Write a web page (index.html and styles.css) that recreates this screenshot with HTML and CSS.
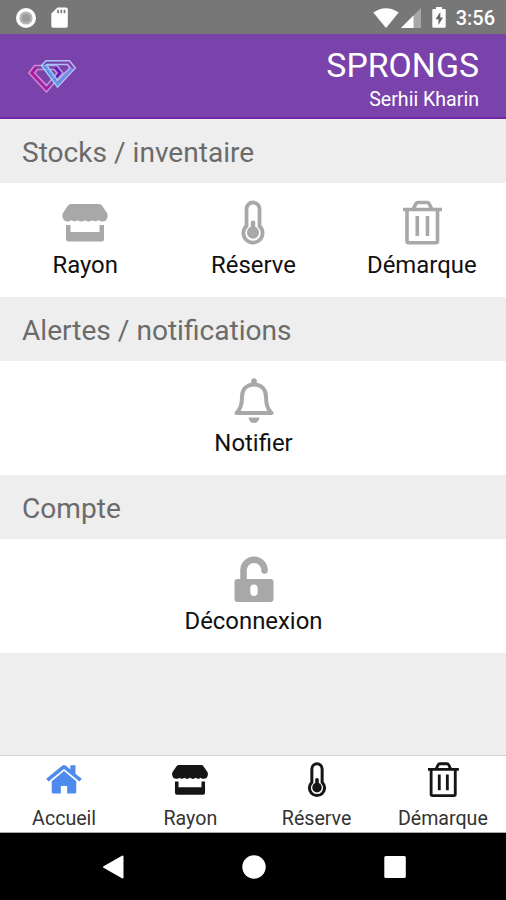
FILE: index.html
```
<!DOCTYPE html>
<html lang="fr">
<head>
    <meta charset="UTF-8">
    <meta name="viewport" content="width=device-width, initial-scale=1.0">
    <title>Sprongs - Accueil</title>
    <link rel="stylesheet" href="styles.css">
</head>
<body>
    <!-- Icônes partagées entre les tuiles et la barre d'onglets -->
    <svg class="sprite" aria-hidden="true">
        <symbol id="icon-store" viewBox="0 0 48 48">
            <path fill="currentColor" d="M10 5H38Q40 5 41 6.5L46 14Q47 15.500 46.500 18Q45.500 22.500 41.500 22.500Q39 22.500 37.500 21Q35 23.500 31 21.200Q28 24 24 21.200Q20 24 17 21.200Q13 23.500 10.500 21Q9 22.500 6.500 22.500Q2.500 22.500 1.500 18Q1 15.500 2 14L7 6.500Q8 5 10 5Z"/>
            <path fill="currentColor" d="M5 26H9.500V33H38.500V26H43V40Q43 42.500 40.500 42.500H7.500Q5 42.500 5 40Z"/>
        </symbol>
        <symbol id="icon-thermo" viewBox="0 0 48 48">
            <path fill="none" stroke="currentColor" stroke-width="3.800" d="M17.500 27V10A6.500 6.500 0 0 1 30.500 10V27A9.600 9.600 0 1 1 17.500 27Z"/>
            <path fill="currentColor" d="M21.800 22.500Q24 20.500 26.200 22.500V27.800Q30 29.500 30 33.800A6 6 0 0 1 18 33.800Q18 29.500 21.800 27.800Z"/>
        </symbol>
        <symbol id="icon-trash" viewBox="0 0 48 48">
            <g fill="none" stroke="currentColor" stroke-width="3.600">
                <path d="M5 10.500H44M9 10.500V42Q9 43.700 10.700 43.700H37.800Q39.500 43.700 39.500 42V10.500"/>
                <path d="M15.500 9.500L18 4.500Q18.500 3.500 20 3.500H29Q30.500 3.500 31 4.500L33.500 9.500"/>
                <path d="M19.300 17V37M29.500 17V37"/>
            </g>
        </symbol>
        <symbol id="icon-bell" viewBox="0 0 48 48">
            <path fill="none" stroke="currentColor" stroke-width="4" stroke-linejoin="round" d="M6.500 36Q12 31 12 20C12 12 17 7.500 24 7.500S36 12 36 20Q36 31 41.500 36Z"/>
            <path fill="currentColor" d="M21.200 8V4A2.800 2.800 0 0 1 26.800 4V8ZM18.500 40.500H29.500Q28.500 46 24 46T18.500 40.500Z"/>
        </symbol>
        <symbol id="icon-unlock" viewBox="0 0 48 48">
            <path fill="none" stroke="currentColor" stroke-width="6.500" stroke-linecap="round" d="M13.500 27V15A10.500 10.500 0 0 1 34.500 15.500"/>
            <path fill="currentColor" fill-rule="evenodd" d="M7.500 24H40.500Q43.500 24 43.500 27V44Q43.500 47 40.500 47H7.500Q4.500 47 4.500 44V27Q4.500 24 7.500 24ZM24 29.500Q20.300 29.500 20.300 33.500V37Q20.300 41 24 41T27.700 37V33.500Q27.700 29.500 24 29.500Z"/>
        </symbol>
        <symbol id="icon-home" viewBox="0 0 48 48">
            <path fill="currentColor" d="M24 12.500L39.500 25.500V39Q39.500 41 37.500 41H28V31.500H20V41H10.500Q8.500 41 8.500 39V25.500Z"/>
            <path fill="currentColor" d="M1.500 22.500L22 5.800Q24 4.200 26 5.800L32 10.700V5.500H38.500V16L46.500 22.500L43.500 26L24 10L4.500 26Z"/>
        </symbol>
    </svg>

    <div class="statusbar">
        <div class="status-left">
            <svg width="22" height="22" viewBox="0 0 22 22">
                <circle cx="11" cy="11" r="8.300" fill="#b5b5b5" stroke="#fff" stroke-width="3.400"/>
                <circle cx="11" cy="11" r="4" fill="#9a9a9a"/>
            </svg>
            <svg width="17" height="21" viewBox="0 0 17 21">
                <path fill="#fff" d="M6.500 0.500H15Q16.800 0.500 16.800 2.300V19Q16.800 20.700 15 20.700H2Q0.300 20.700 0.300 19V6.500Z"/>
                <path stroke="#777" stroke-width="1.700" d="M7 2.800V6.200M10.300 2.800V6.200M13.500 2.800V6.200"/>
            </svg>
        </div>
        <div class="status-right">
            <svg class="wifi" width="26" height="20" viewBox="0 0 26 20">
                <path fill="#fff" d="M0.300 4.500Q13 -4.200 25.700 4.500L13 20Z"/>
            </svg>
            <svg class="signal" width="20" height="20" viewBox="0 0 20 20">
                <path fill="#a8a8a8" d="M20 0V20H0Z"/>
                <path fill="#fff" d="M12.500 7.500V20H0Z"/>
            </svg>
            <svg class="battery" width="14" height="21" viewBox="0 0 14 21">
                <path fill="#fff" d="M4 0H10V2H12.500Q13.700 2 13.700 3.200V19.500Q13.700 20.700 12.500 20.700H1.500Q0.300 20.700 0.300 19.500V3.200Q0.300 2 1.500 2H4Z"/>
                <path fill="#666" d="M8.300 5L3.500 12.200H6.500V18L11 10.500H8.300Z"/>
            </svg>
            <span class="clock">3:56</span>
        </div>
    </div>

    <header class="header">
        <svg class="logo" width="50" height="36" viewBox="0 0 50 36">
            <defs>
                <linearGradient id="pink" x1="0" x2="1">
                    <stop offset="0" stop-color="#e07cc8"/>
                    <stop offset="1" stop-color="#b79be8"/>
                </linearGradient>
                <linearGradient id="blue" x1="0" x2="1">
                    <stop offset="0" stop-color="#8cd6f5"/>
                    <stop offset="1" stop-color="#c8b2f4"/>
                </linearGradient>
            </defs>
            <g fill="none" stroke-width="1.500">
                <path stroke="#b5149f" stroke-width="2" d="M8.500 8.500L4.500 14L19.500 30.500L23 26.500"/>
                <path stroke="#6215bd" stroke-width="2" d="M28.500 8.500L33 14L26.500 22"/>
                <path stroke="url(#pink)" d="M7.500 6.500H30L36 14L19.500 33L1.800 14Z"/>
                <path stroke="url(#pink)" d="M10.500 10.500H27L30 14L19.500 26.500L7.800 14Z"/>
                <path stroke="#5b9df0" stroke-width="2" d="M17.500 6.500L30.500 25L45.500 9"/>
                <path stroke="url(#blue)" d="M19 1.800H42.500L48.300 9L30.500 28L14.500 6.500Z"/>
                <path stroke="url(#blue)" d="M20.500 5.500H40.500L43 9L30.500 21.500L19.500 6Z"/>
            </g>
        </svg>
        <div class="header-text">
            <h1>SPRONGS</h1>
            <p>Serhii Kharin</p>
        </div>
    </header>

    <main>
        <h2>Stocks / inventaire</h2>
        <div class="row">
            <div class="tile"><svg><use href="#icon-store"/></svg><span>Rayon</span></div>
            <div class="tile"><svg><use href="#icon-thermo"/></svg><span>Réserve</span></div>
            <div class="tile"><svg><use href="#icon-trash"/></svg><span>Démarque</span></div>
        </div>

        <h2>Alertes / notifications</h2>
        <div class="row">
            <div class="tile"><svg><use href="#icon-bell"/></svg><span>Notifier</span></div>
        </div>

        <h2>Compte</h2>
        <div class="row">
            <div class="tile"><svg><use href="#icon-unlock"/></svg><span>Déconnexion</span></div>
        </div>
    </main>

    <nav class="tabs">
        <div class="tab active"><svg><use href="#icon-home"/></svg><span>Accueil</span></div>
        <div class="tab"><svg><use href="#icon-store"/></svg><span>Rayon</span></div>
        <div class="tab"><svg><use href="#icon-thermo"/></svg><span>Réserve</span></div>
        <div class="tab"><svg><use href="#icon-trash"/></svg><span>Démarque</span></div>
    </nav>

    <div class="navbar">
        <svg width="24" height="26" viewBox="0 0 24 26"><path fill="#fff" stroke="#fff" stroke-width="2" stroke-linejoin="round" d="M21.500 2.500V23.500L3 13Z"/></svg>
        <svg width="24" height="26" viewBox="0 0 24 26"><circle cx="12" cy="13" r="11.700" fill="#fff"/></svg>
        <svg width="24" height="26" viewBox="0 0 24 26"><rect x="1.300" y="2" width="21.500" height="22" rx="1.500" fill="#fff"/></svg>
    </div>
</body>
</html>
```

FILE: styles.css
```
* {
    box-sizing: border-box;
}

body {
    font-family: Roboto, Arial, sans-serif;
    margin: 0;
    height: 900px;
    display: flex;
    flex-direction: column;
    background-color: #eee;
    color: #111;
    overflow: hidden;
}

h1, h2, p {
    margin: 0;
    font-weight: 400;
}

svg {
    display: block;
    flex: none;
}

.sprite {
    display: none;
}

/* Barre d'état */
.statusbar {
    height: 34px;
    flex: none;
    display: flex;
    justify-content: space-between;
    align-items: center;
    padding: 1px 11px 0 15px;
    background-color: #777;
    color: white;
}

.status-left, .status-right {
    display: flex;
    align-items: center;
}

.status-left {
    gap: 14px;
}

.signal {
    margin-left: 2px;
}

.battery {
    margin-left: 11px;
}

.clock {
    margin-left: 10px;
    font-size: 20px;
    line-height: 24px;
    font-weight: 500;
}

.header {
    height: 85px;
    flex: none;
    display: flex;
    justify-content: space-between;
    padding: 0 27px 0 27px;
    background-color: #7a43ab;
    border-bottom: 2px solid #7326a3;
    color: white;
}

.logo {
    margin-top: 25px;
}

.header-text {
    padding-top: 12px;
    text-align: right;
}

.header h1 {
    font-size: 33.8px;
    line-height: 40px;
}

.header p {
    font-size: 19.6px;
    line-height: 24px;
    margin-top: 2px;
}

main {
    flex: 1;
}

h2 {
    height: 64px;
    padding-left: 22px;
    font-size: 28.1px;
    line-height: 67px;
    color: #6b6b6b;
}

.row {
    display: flex;
    height: 114px;
    padding-left: 1px;
    background: white;
}

.tile {
    flex: 1;
    display: flex;
    flex-direction: column;
    align-items: center;
    padding-top: 16px;
    font-size: 23.9px;
    line-height: 30px;
}

.tile svg {
    width: 48px;
    height: 48px;
    margin-bottom: 3px;
    color: #a8a8a8;
}

/* Onglets du bas */
.tabs {
    height: 78px;
    flex: none;
    display: flex;
    padding-left: 1px;
    background: white;
    border-top: 1px solid #d2d2d2;
    border-bottom: 1px solid #aaa;
}

.tab {
    flex: 1;
    display: flex;
    flex-direction: column;
    align-items: center;
    padding-top: 5px;
    font-size: 19.6px;
    line-height: 24px;
    color: #333;
}

.tab svg {
    width: 38px;
    height: 38px;
    margin-bottom: 8px;
    color: #151515;
}

.tab.active svg {
    color: #4f8bec;
}

.navbar {
    height: 67px;
    flex: none;
    display: flex;
    justify-content: center;
    align-items: center;
    gap: 117px;
    padding-left: 1px;
    background-color: black;
}
```
